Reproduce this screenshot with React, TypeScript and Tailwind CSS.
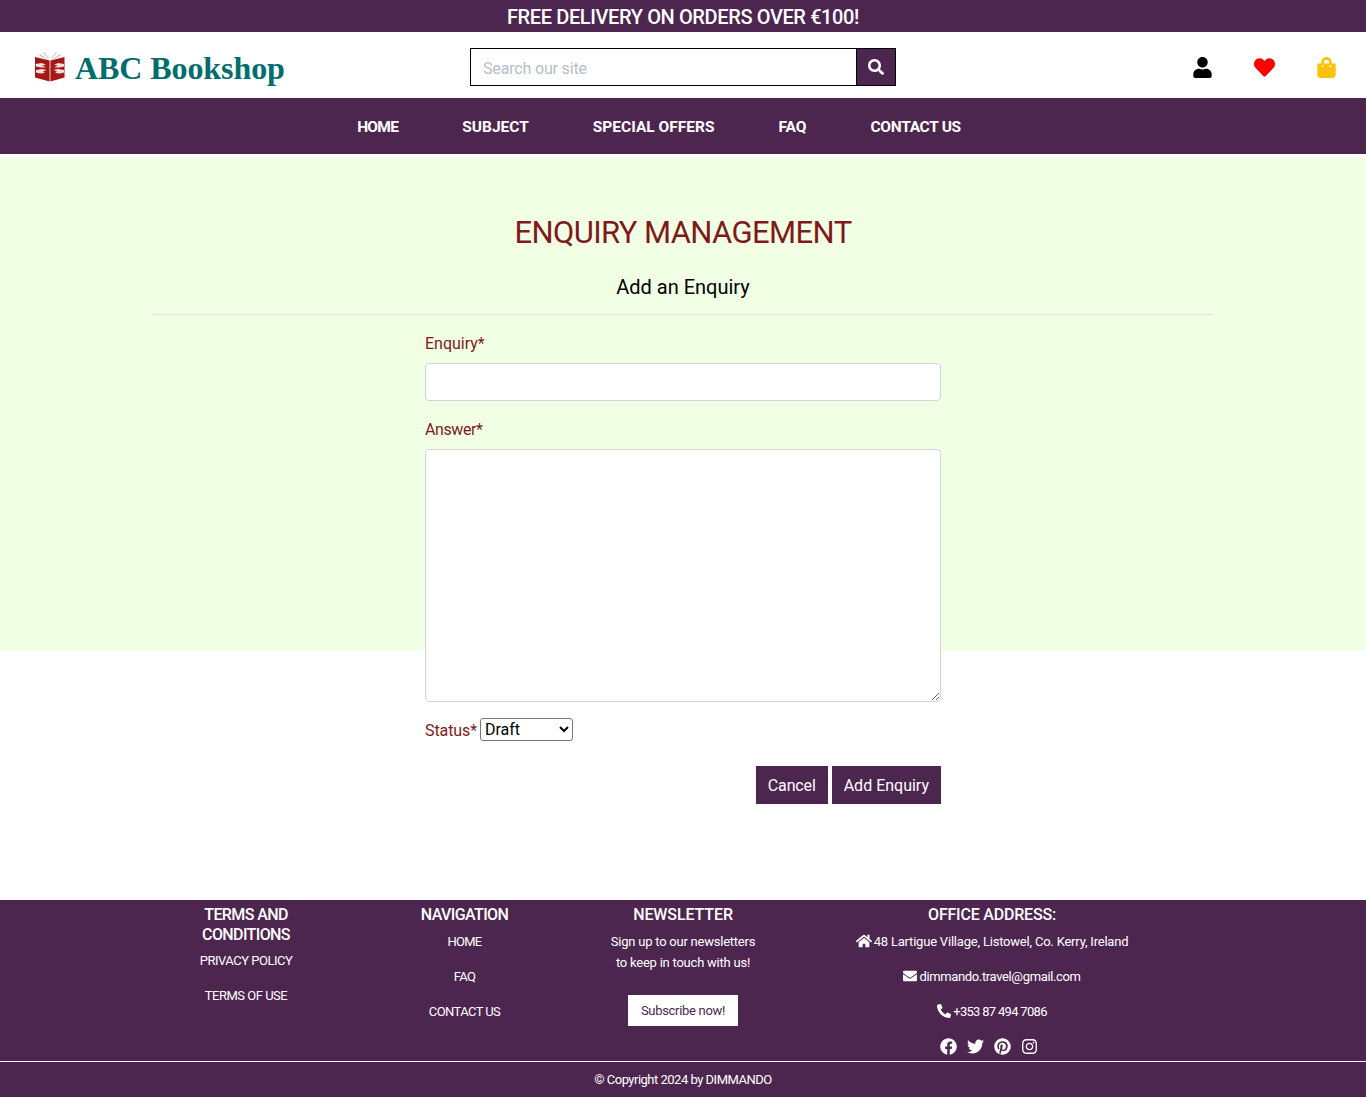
import { FaEnvelope, FaFacebook, FaHeart, FaHome, FaInstagram, FaPhoneAlt, FaPinterest, FaSearch, FaShoppingBag, FaTwitter, FaUser } from "react-icons/fa";

const navLinks = [
  { label: "HOME", tracking: "tracking-[-0.7px]" },
  { label: "SUBJECT", tracking: "" },
  { label: "SPECIAL OFFERS", tracking: "" },
  { label: "FAQ", tracking: "" },
  { label: "CONTACT US", tracking: "tracking-[-0.3px]" },
];

function Logo() {
  return (
    <svg viewBox="0 0 30 30" className="w-[30px] h-[30px] shrink-0">
      <path d="M5 2 L13.5 7.5 L12 7.5 L4 3.5 Z M9 0 L14.3 6.5 L13.5 6.5 L8 1 Z" fill="#c9c9c9" />
      <path d="M25 2 L16.5 7.5 L18 7.5 L26 3.5 Z M21 0 L15.7 6.5 L16.5 6.5 L22 1 Z" fill="#c9c9c9" />
      <path d="M0 5 L14.6 8.5 V29.5 L0 25.5 Z" fill="#a61815" />
      <path d="M29.5 5 L15.4 8.5 V29.5 L29.5 25.5 Z" fill="#a61815" />
      <path d="M0.5 12 L7 11 L11 13 L7 13.5 L11 15.5 L6 15.5 L1 14.5 Z M1 18 L7 17 L11.5 18 L8 19.5 L10 21 L5 21.5 L1 20.5 Z" fill="#f6dedc" />
      <path d="M29 12 L23 11 L19 13 L23 13.5 L19 15.5 L24 15.5 L29 14.5 Z M29 18 L23 17 L18.5 18 L22 19.5 L20 21 L25 21.5 L29 20.5 Z" fill="#f6dedc" />
    </svg>
  );
}

function Header() {
  return (
    <header className="bg-white h-[66px] pt-1 flex items-center relative">
      <div className="w-[470px] pl-[35px] flex items-center shrink-0">
        <Logo />
        <span className="ml-[10px] mt-[1px] font-['Liberation_Serif',serif] font-bold text-[32px] leading-none text-[#006d6f] tracking-[-0.08px]">ABC Bookshop</span>
      </div>
      <div className="flex w-[426px] h-[38px] border border-black">
        <input
          placeholder="Search our site"
          className="flex-1 min-w-0 px-3 pt-1 text-base text-[#495057] placeholder:text-[#b5bec7] outline-none tracking-[-0.17px]"
        />
        <button className="w-[39px] bg-[#4d2650] border-l border-black flex items-center justify-center text-white">
          <FaSearch className="w-4 h-4" />
        </button>
      </div>
      <div className="ml-auto flex items-center gap-[41px] pr-[29px]">
        <FaUser className="w-[21px] h-[21px] text-black" />
        <FaHeart className="w-[21px] h-[21px] text-[#ff0000]" />
        <FaShoppingBag className="w-[21px] h-[21px] text-[#ffc107]" />
      </div>
    </header>
  );
}

function FormLabel({ children, className = "" }: { children: string; className?: string }) {
  return <label className={`block text-base leading-6 text-[#801a1a] ${className}`}>{children}</label>;
}

function EnquiryForm() {
  return (
    <form className="w-[516px] mx-auto mt-[17px]">
      <FormLabel>Enquiry*</FormLabel>
      <input className="block w-full h-[38px] mt-[7px] bg-white border border-[#ced4da] rounded" />
      <div className="mt-[17px]">
        <FormLabel className="tracking-[-0.4px]">Answer*</FormLabel>
      </div>
      <textarea className="block w-full h-[253px] mt-[7px] bg-white border border-[#ced4da] rounded" />
      <div className="flex items-center mt-4 h-[24px]">
        <span className="pt-[2px] text-base text-[#801a1a] tracking-[-0.1px]">Status*</span>
        <select className="self-start ml-[3px] w-[93px] h-[23px] bg-white border border-[#767676] rounded-[3px] text-base leading-none text-black appearance-auto">
          <option>Draft</option>
        </select>
      </div>
      <div className="flex justify-end gap-1 mt-[24px]">
        <button type="button" className="h-[38px] px-3 pt-[2px] bg-[#4d2650] text-white text-base tracking-[-0.15px]">Cancel</button>
        <button type="button" className="h-[38px] px-3 pt-[2px] bg-[#4d2650] text-white text-base">Add Enquiry</button>
      </div>
    </form>
  );
}

function FooterHeading({ children, className = "" }: { children: string; className?: string }) {
  return <h5 className={`font-medium text-base leading-5 text-white ${className}`}>{children}</h5>;
}

function FooterLine({ children, className = "" }: { children: React.ReactNode; className?: string }) {
  return <p className={`h-[35px] leading-[21px] text-[13px] text-white flex items-start justify-center gap-[2px] ${className}`}>{children}</p>;
}

function Footer() {
  return (
    <footer className="bg-[#4d2650] text-white h-[197px]">
      <div className="h-[162px] border-b border-white flex justify-center text-center pt-[5px]">
        <div className="w-[1062px] flex">
          <div className="w-[188px]">
            <FooterHeading className="w-[130px] mx-auto tracking-[-0.6px]">TERMS AND CONDITIONS</FooterHeading>
            <div className="mt-[5px]">
              <FooterLine className="tracking-[-0.5px]">PRIVACY POLICY</FooterLine>
              <FooterLine className="tracking-[-0.5px]">TERMS OF USE</FooterLine>
            </div>
          </div>
          <div className="w-[249px]">
            <FooterHeading className="tracking-[-0.6px]">NAVIGATION</FooterHeading>
            <div className="mt-[6px]">
              <FooterLine className="tracking-[-0.8px]">HOME</FooterLine>
              <FooterLine className="tracking-[-0.6px]">FAQ</FooterLine>
              <FooterLine className="tracking-[-0.6px]">CONTACT US</FooterLine>
            </div>
          </div>
          <div className="w-[188px]">
            <FooterHeading className="tracking-[-0.1px]">NEWSLETTER</FooterHeading>
            <p className="mt-[6px] text-[13px] leading-[21px] tracking-[-0.23px]">Sign up to our newsletters<br />to keep in touch with us!</p>
            <button className="mt-[22px] h-[31px] w-[110px] bg-white text-[#4d2650] text-[13px] tracking-[-0.3px]">Subscribe now!</button>
          </div>
          <div className="w-[430px]">
            <FooterHeading className="tracking-[-0.2px]">OFFICE ADDRESS:</FooterHeading>
            <div className="mt-[6px]">
              <FooterLine className="tracking-[-0.2px]"><FaHome className="w-4 h-4 mt-[2px]" />48 Lartigue Village, Listowel, Co. Kerry, Ireland</FooterLine>
              <FooterLine className="tracking-[-0.36px]"><FaEnvelope className="w-[14px] h-[14px] mt-[3px]" />dimmando.travel@gmail.com</FooterLine>
              <FooterLine className="tracking-[-0.7px]"><FaPhoneAlt className="w-[14px] h-[14px] mt-[3px]" />+353 87 494 7086</FooterLine>
            </div>
            <div className="flex justify-center gap-[10px] mt-[2px] pr-[7px]">
              <FaFacebook className="w-[17px] h-[17px]" />
              <FaTwitter className="w-[17px] h-[17px]" />
              <FaPinterest className="w-[17px] h-[17px]" />
              <FaInstagram className="w-[17px] h-[17px]" />
            </div>
          </div>
        </div>
      </div>
      <p className="text-center text-[13px] leading-[35px] tracking-[-0.5px]">© Copyright 2024 by DIMMANDO</p>
    </footer>
  );
}

export default function App() {
  return (
    <div className="font-['Roboto',sans-serif] bg-white">
      <div className="bg-[#4d2650] h-8 text-center text-white text-[20px] font-medium leading-[35px] tracking-[-0.38px]">FREE DELIVERY ON ORDERS OVER €100!</div>
      <Header />
      <nav className="bg-[#4d2650] h-14 pt-1 flex justify-center pr-[48px] gap-[64px] items-center text-white font-bold text-[15.5px]">
        {navLinks.map((link) => (
          <a key={link.label} className={link.tracking}>{link.label}</a>
        ))}
      </nav>
      <main className="h-[746px] pt-1">
        <div className="bg-[#f1ffe5] h-[492px]">
          <div className="pt-[55px] w-[1062px] mx-auto">
            <h1 className="text-center text-[31px] leading-10 text-[#801a1a] tracking-[-0.6px]">ENQUIRY MANAGEMENT</h1>
            <h2 className="text-center text-xl leading-6 text-black mt-[22px] pb-[15px] border-b border-[#dfe3dc]">Add an Enquiry</h2>
            <EnquiryForm />
          </div>
        </div>
      </main>
      <Footer />
    </div>
  );
}
